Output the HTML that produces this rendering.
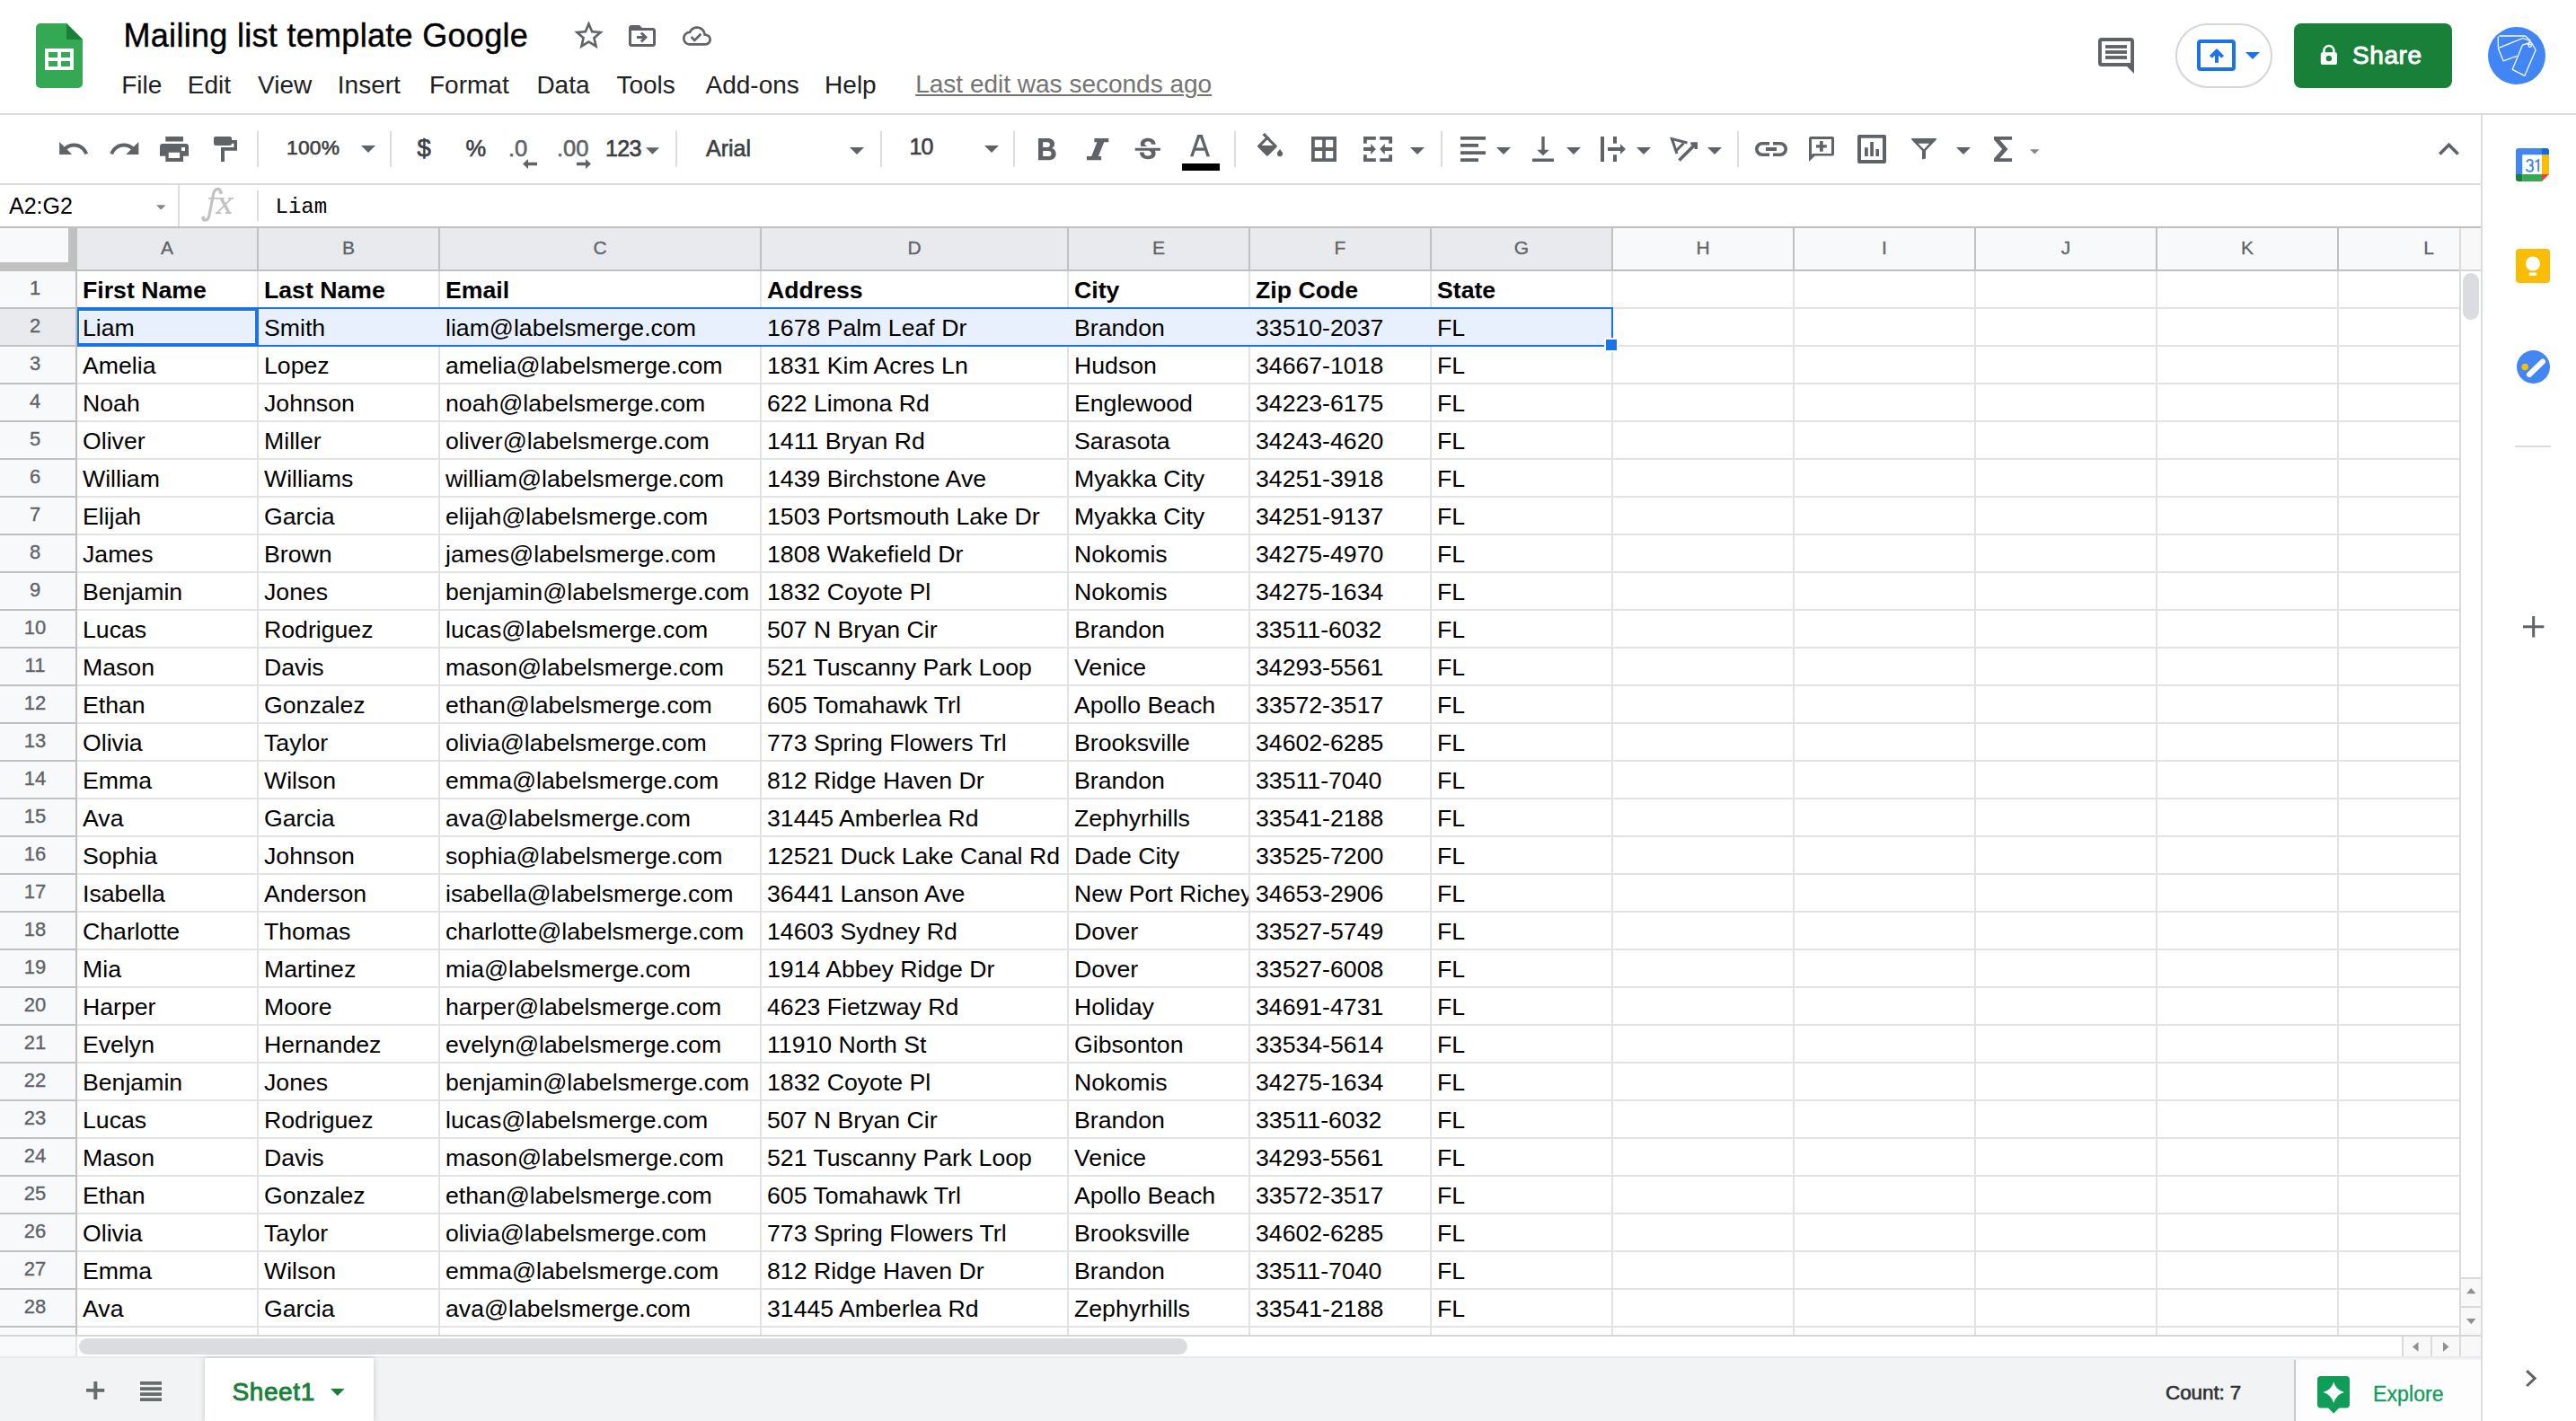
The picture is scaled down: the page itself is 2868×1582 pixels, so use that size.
<!DOCTYPE html>
<html><head><meta charset="utf-8"><title>Mailing list template Google - Google Sheets</title>
<style>
html,body{margin:0;padding:0;}
body{width:2868px;height:1582px;overflow:hidden;position:relative;background:#fff;font-family:"Liberation Sans",sans-serif;}
.t{position:absolute;white-space:nowrap;}
.r{position:absolute;}
.s{position:absolute;overflow:visible;}
.cell{position:absolute;white-space:nowrap;overflow:hidden;font-size:26.67px;line-height:26.67px;color:#000;}
</style></head><body>

<svg class="s" style="left:40px;top:26px;" width="52" height="72" viewBox="0 0 52 72"><path d="M5 0H34L52 18V67A5 5 0 0 1 47 72H5A5 5 0 0 1 0 67V5A5 5 0 0 1 5 0Z" fill="#34a853"/><path d="M34 0L52 18H34Z" fill="#188038"/><path d="M10 28H42V52H10Z M14 32V38H24V32Z M28 32V38H38V32Z M14 42V48H24V42Z M28 42V48H38V42Z" fill="#fff" fill-rule="evenodd"/></svg>
<div class="t" style="left:137.5px;top:21.5px;font-size:36px;line-height:36px;color:#000;font-weight:normal;letter-spacing:0.3px;-webkit-text-stroke:0.4px #000;">Mailing list template Google</div>
<svg class="s" style="left:635.8px;top:20.3px;" width="39" height="39" viewBox="0 0 24 24"><path fill="#5f6368" d="M22 9.24l-7.19-.62L12 2 9.19 8.63 2 9.24l5.46 4.73L5.82 21 12 17.27 18.18 21l-1.63-7.03L22 9.24zM12 15.4l-3.76 2.27 1-4.28-3.32-2.88 4.38-.38L12 6.1l1.71 4.04 4.38.38-3.32 2.88 1 4.28L12 15.4z"/></svg>
<svg class="s" style="left:697px;top:22px;" width="36" height="36" viewBox="0 0 24 24"><path fill="#5f6368" d="M20 6h-8l-2-2H4c-1.1 0-1.99.9-1.99 2L2 18c0 1.1.9 2 2 2h16c1.1 0 2-.9 2-2V8c0-1.1-.9-2-2-2zm0 12H4V8h16v10zm-7.84-6H8v2h4.16l-1.59 1.59L11.99 17 16 13.01 11.99 9l-1.41 1.41L12.16 12z"/></svg>
<svg class="s" style="left:760px;top:23.5px;" width="32" height="32" viewBox="0 0 24 24"><path fill="#5f6368" d="M19.35 10.04C18.67 6.59 15.64 4 12 4 9.11 4 6.6 5.64 5.35 8.04 2.34 8.36 0 10.91 0 14c0 3.31 2.69 6 6 6h13c2.76 0 5-2.24 5-5 0-2.64-2.05-4.78-4.65-4.960zM19 18H6c-2.21 0-4-1.79-4-4 0-2.050 1.53-3.76 3.56-3.97l1.07-.11.5-.95C8.08 7.14 9.94 6 12 6c2.62 0 4.88 1.86 5.39 4.43l.3 1.5 1.53.11c1.56.1 2.78 1.41 2.78 2.96 0 1.65-1.35 3-3 3zm-9-3.82l-2.09-2.09L6.5 13.5 10 17l6.01-6.01-1.41-1.41z"/></svg>
<div class="t" style="left:135.2px;top:80.6px;font-size:28px;line-height:28px;color:#202124;font-weight:normal;">File</div>
<div class="t" style="left:208.8px;top:80.6px;font-size:28px;line-height:28px;color:#202124;font-weight:normal;">Edit</div>
<div class="t" style="left:287.0px;top:80.6px;font-size:28px;line-height:28px;color:#202124;font-weight:normal;">View</div>
<div class="t" style="left:375.8px;top:80.6px;font-size:28px;line-height:28px;color:#202124;font-weight:normal;">Insert</div>
<div class="t" style="left:478.0px;top:80.6px;font-size:28px;line-height:28px;color:#202124;font-weight:normal;">Format</div>
<div class="t" style="left:597.4px;top:80.6px;font-size:28px;line-height:28px;color:#202124;font-weight:normal;">Data</div>
<div class="t" style="left:686.4px;top:80.6px;font-size:28px;line-height:28px;color:#202124;font-weight:normal;">Tools</div>
<div class="t" style="left:785.5px;top:80.6px;font-size:28px;line-height:28px;color:#202124;font-weight:normal;">Add-ons</div>
<div class="t" style="left:918.1px;top:80.6px;font-size:28px;line-height:28px;color:#202124;font-weight:normal;">Help</div>
<div class="t" style="left:1019.2px;top:80.0px;font-size:28px;line-height:28px;color:#747474;font-weight:normal;text-decoration:underline;text-decoration-thickness:2px;text-underline-offset:2px;">Last edit was seconds ago</div>
<svg class="s" style="left:2336px;top:42px;" width="40" height="40" viewBox="0 0 40 40"><path fill="#5f6368" fill-rule="evenodd" d="M4 0H36A4 4 0 0 1 40 4V40L32 32H4A4 4 0 0 1 0 28V4A4 4 0 0 1 4 0ZM3.9 3.9V28.1H36.1V3.9Z"/><rect x="8" y="8.1" width="24" height="3.8" fill="#5f6368"/><rect x="8" y="14.1" width="24" height="3.8" fill="#5f6368"/><rect x="8" y="20.1" width="24" height="3.8" fill="#5f6368"/></svg>
<div class="r" style="left:2422px;top:26px;width:103.5px;height:67.5px;border:2px solid #d6d6d6;border-radius:36px;"></div>
<div class="r" style="left:2446px;top:44px;width:35.2px;height:27.2px;border:4.4px solid #1a73e8;border-radius:4px;"></div>
<svg class="s" style="left:2457px;top:50px;" width="22" height="22" viewBox="0 0 22 22"><path fill="none" stroke="#1a73e8" stroke-width="4" d="M4.4 13.4L11 6.8L17.6 13.4"/><rect x="9" y="7" width="4" height="12.8" fill="#1a73e8"/></svg>
<svg class="s" style="left:2499.6px;top:57.8px;" width="16" height="8.2" viewBox="0 0 16 8"><path fill="#1a73e8" d="M0 0H16L8 8Z"/></svg>
<div class="r" style="left:2554px;top:26px;width:176px;height:72px;background:#188038;border-radius:8px;"></div>
<svg class="s" style="left:2583px;top:49px;" width="20" height="24" viewBox="0 0 20 24"><path fill="none" stroke="#fff" stroke-width="2.6" d="M4.4 10V7.5A5.5 5.5 0 0 1 15.4 7.5V10"/><rect x="0.8" y="9.2" width="18.2" height="13.9" rx="2" fill="#fff"/><circle cx="9.9" cy="16.1" r="3.2" fill="#188038"/></svg>
<div class="t" style="left:2619.0px;top:48.3px;font-size:28px;line-height:28px;color:#fff;font-weight:normal;letter-spacing:0.6px;-webkit-text-stroke:0.9px #fff;">Share</div>
<svg class="s" style="left:2770px;top:30px;" width="64" height="64" viewBox="0 0 64 64"><circle cx="32" cy="32" r="32" fill="#4285f4"/><g fill="none" stroke="#fff" stroke-width="1.3" stroke-linejoin="round"><path d="M12.5 10H41.4L47.3 15.3"/><path d="M11.3 22.5V10.5"/><path d="M11.3 23.7L39 12.5L47 15.5L44 20"/><path d="M11.3 23.7L17.2 37.9L32 32.3"/><path d="M38.5 20.1L48 17.2L53.2 25.5L40.8 54.4L27.2 47.3Z"/><circle cx="46.7" cy="20.7" r="1.6"/></g></svg>
<div class="r" style="left:0px;top:126px;width:2868px;height:2px;background:#dadce0;"></div>
<svg class="s" style="left:62.877761413843885px;top:147.0721649484536px;" width="37.466863033873345" height="37.466863033873345" viewBox="0 0 24 24"><path fill="#5f6368" d="M12.5 8c-2.65 0-5.05.99-6.9 2.6L2 7v9h9l-3.62-3.62c1.39-1.16 3.16-1.88 5.12-1.88 3.54 0 6.55 2.31 7.6 5.5l2.37-.78C21.08 11.03 17.15 8 12.5 8z"/></svg>
<svg class="s" style="left:119.5958762886598px;top:147.0721649484536px;" width="37.466863033873345" height="37.466863033873345" viewBox="0 0 24 24"><path fill="#5f6368" d="M18.4 10.6C16.55 8.99 14.15 8 11.5 8c-4.65 0-8.58 3.03-9.96 7.22L3.9 16c1.05-3.19 4.05-5.5 7.6-5.5 1.95 0 3.73.72 5.12 1.88L13 16h9V7l-3.6 3.6z"/></svg>
<svg class="s" style="left:178px;top:152px;" width="32" height="28" viewBox="0 0 32 28"><path fill="#5f6368" fill-rule="evenodd" d="M6.3 0H26V5.6H6.3Z M3 8H29A3 3 0 0 1 32 11V21.7H26V28H6.3V21.7H0V11A3 3 0 0 1 3 8Z M9.7 17.8V23.9H22.1V17.8Z M24 12V16H28V12Z"/></svg>
<svg class="s" style="left:238px;top:152px;" width="26" height="28" viewBox="0 0 26 28"><path fill="#5f6368" d="M2 0H18A2 2 0 0 1 20 2V8A2 2 0 0 1 18 10H2A2 2 0 0 1 0 8V2A2 2 0 0 1 2 0Z M20 4H26V15.8H12V28H8V12H22.4V7.8H20Z"/></svg>
<div class="r" style="left:286px;top:146px;width:2px;height:40px;background:#dadce0;"></div>
<div class="t" style="left:319.0px;top:152.5px;font-size:22.8px;line-height:22.8px;color:#3c4043;font-weight:normal;letter-spacing:0.2px;-webkit-text-stroke:0.6px #3c4043;">100%</div>
<svg class="s" style="left:402px;top:162px;" width="16" height="8" viewBox="0 0 16 8"><path fill="#5f6368" d="M0 0H16L8 8Z"/></svg>
<div class="r" style="left:434px;top:146px;width:2px;height:40px;background:#dadce0;"></div>
<div class="t" style="left:464.5px;top:151.2px;font-size:27.5px;line-height:27.5px;color:#3c4043;font-weight:normal;-webkit-text-stroke:0.7px #3c4043;">$</div>
<div class="t" style="left:518.5px;top:152.9px;font-size:25.5px;line-height:25.5px;color:#3c4043;font-weight:normal;-webkit-text-stroke:0.6px #3c4043;">%</div>
<div class="t" style="left:566.0px;top:152.7px;font-size:25.5px;line-height:25.5px;color:#5f6368;font-weight:normal;-webkit-text-stroke:0.6px #5f6368;">.0</div>
<svg class="s" style="left:582px;top:176.5px;" width="16" height="11" viewBox="0 0 16 11"><path fill="#5f6368" d="M0 5.5L6 0V3.8H16V7.2H6V11Z"/></svg>
<div class="t" style="left:620.0px;top:152.7px;font-size:25.5px;line-height:25.5px;color:#5f6368;font-weight:normal;-webkit-text-stroke:0.6px #5f6368;">.00</div>
<svg class="s" style="left:642px;top:176.5px;" width="16" height="11" viewBox="0 0 16 11"><path fill="#5f6368" d="M16 5.5L10 0V3.8H0V7.2H10V11Z"/></svg>
<div class="t" style="left:674.0px;top:152.8px;font-size:25px;line-height:25px;color:#3c4043;font-weight:normal;letter-spacing:-0.6px;-webkit-text-stroke:0.7px #3c4043;">123</div>
<svg class="s" style="left:718.5px;top:163.8px;" width="15" height="8" viewBox="0 0 16 8"><path fill="#5f6368" d="M0 0H16L8 8Z"/></svg>
<div class="r" style="left:752px;top:146px;width:2px;height:40px;background:#dadce0;"></div>
<div class="t" style="left:786.0px;top:152.8px;font-size:25px;line-height:25px;color:#3c4043;font-weight:normal;letter-spacing:0px;-webkit-text-stroke:0.6px #3c4043;">Arial</div>
<svg class="s" style="left:946px;top:163.8px;" width="16" height="8" viewBox="0 0 16 8"><path fill="#5f6368" d="M0 0H16L8 8Z"/></svg>
<div class="r" style="left:980px;top:146px;width:2px;height:40px;background:#dadce0;"></div>
<div class="t" style="left:1012.5px;top:151.1px;font-size:25px;line-height:25px;color:#3c4043;font-weight:normal;letter-spacing:-0.8px;-webkit-text-stroke:0.6px #3c4043;">10</div>
<svg class="s" style="left:1096px;top:162px;" width="16" height="8" viewBox="0 0 16 8"><path fill="#5f6368" d="M0 0H16L8 8Z"/></svg>
<div class="r" style="left:1128px;top:146px;width:2px;height:40px;background:#dadce0;"></div>
<svg class="s" style="left:1156px;top:153.7px;" width="20" height="24.3" viewBox="0 0 20 24.3"><path fill="#5f6368" fill-rule="evenodd" d="M0 0H10.5C15 0 18 2.4 18 6.2C18 8.6 16.8 10.3 15 11C17.8 11.8 19.7 14 19.7 17.2C19.7 21.7 16.4 24.3 11.5 24.3H0Z M5.2 4.2V10H10C12 10 13 8.9 13 7.1C13 5.2 12 4.2 10 4.2Z M5.2 13.9V20.1H11C13.3 20.1 14.5 18.9 14.5 17C14.5 15 13.3 13.9 11 13.9Z"/></svg>
<svg class="s" style="left:1210px;top:153.7px;" width="24.3" height="24.3" viewBox="0 0 24.3 24.3"><path fill="#5f6368" d="M8.4 0H24.3V4.3H19.2L12.9 20H16.1V24.3H0V20H5.2L11.4 4.3H8.4Z"/></svg>
<svg class="s" style="left:1258.899px;top:149.1423px;" width="37.608" height="37.608" viewBox="0 0 24 24"><path fill="#5f6368" d="M7.24 8.75c-.26-.48-.39-1.03-.39-1.67 0-.61.13-1.16.4-1.67.26-.5.63-.93 1.11-1.29.48-.35 1.05-.63 1.7-.83.66-.19 1.39-.29 2.18-.29.81 0 1.54.11 2.21.34.66.22 1.230.54 1.69.94.47.4.83.88 1.08 1.43.25.55.38 1.15.38 1.81h-3.01c0-.31-.05-.59-.15-.85-.09-.27-.24-.49-.44-.68-.2-.19-.45-.33-.75-.44-.3-.1-.66-.16-1.06-.16-.39 0-.74.04-1.03.13-.29.09-.53.21-.72.36-.19.16-.34.34-.44.55-.1.21-.15.43-.15.66 0 .48.25.88.74 1.21.38.25.77.48 1.41.7H7.39c-.05-.08-.11-.17-.15-.25zM21 12v-2H3v2h9.62c.18.07.4.14.55.2.37.17.66.34.87.51.21.17.35.36.43.57.07.2.11.43.11.69 0 .23-.05.45-.14.66-.09.2-.23.38-.42.53-.19.15-.42.26-.71.35-.29.08-.63.13-1.01.13-.43 0-.83-.04-1.18-.13s-.66-.23-.91-.42c-.25-.19-.45-.44-.59-.75-.14-.31-.25-.76-.25-1.21H6.4c0 .55.08 1.13.24 1.58.16.45.37.85.65 1.21.28.35.6.66.98.92.37.26.78.48 1.22.65.44.17.9.3 1.38.39.48.08.96.13 1.44.13.8 0 1.53-.09 2.18-.28s1.21-.45 1.67-.79c.46-.34.82-.77 1.07-1.27s.38-1.07.38-1.71c0-.6-.1-1.14-.31-1.61-.05-.11-.11-.23-.17-.33H21z"/></svg>
<svg class="s" style="left:1325px;top:149.8px;" width="22" height="24.2" viewBox="0 0 22 24.2"><path fill="#5f6368" fill-rule="evenodd" d="M8.3 0H13.7L22 24.2H18.5L16.3 17.8H5.7L3.5 24.2H0Z M6.8 14.5H15.2L11 2.8Z"/></svg>
<div class="r" style="left:1316px;top:182px;width:42px;height:8px;background:#000;"></div>
<div class="r" style="left:1374px;top:146px;width:2px;height:40px;background:#dadce0;"></div>
<svg class="s" style="left:1398px;top:146px;" width="32" height="30" viewBox="0 0 32 30"><path fill="#5f6368" stroke="#5f6368" stroke-width="2" stroke-linejoin="round" fill-rule="evenodd" d="M12.9 6.8L22.9 16.8L12.9 26.8L2.9 16.8Z M12.9 9.6L6.6 16H19.2Z"/><path fill="#fff" d="M12.9 9.6L6.6 16H19.2Z"/><path stroke="#5f6368" stroke-width="3.2" d="M8.7 3L14.6 8.9"/><path fill="#5f6368" d="M27 19.9L24.3 23.6A3.1 3.1 0 1 0 29.7 23.6Z"/></svg>
<svg class="s" style="left:1460px;top:152px;" width="28" height="28" viewBox="0 0 28 28"><path fill="#5f6368" fill-rule="evenodd" d="M0 0H28V28H0Z M3.8 3.8V12.1H12.1V3.8Z M15.9 3.8V12.1H24.2V3.8Z M3.8 15.9V24.2H12.1V15.9Z M15.9 15.9V24.2H24.2V15.9Z"/></svg>
<svg class="s" style="left:1518px;top:152px;" width="32" height="28" viewBox="0 0 32 28"><path fill="#5f6368" d="M0 0H13.8V3.8H3.8V7.8H0Z M32 0H18.2V3.8H28.2V7.8H32Z M0 28H13.8V24.2H3.8V20.2H0Z M32 28H18.2V24.2H28.2V20.2H32Z M0 12H8.2V8.1L13.8 14L8.2 19.9V16H0Z M32 12H23.8V8.1L18.2 14L23.8 19.9V16H32Z"/></svg>
<svg class="s" style="left:1570px;top:163.8px;" width="16" height="8" viewBox="0 0 16 8"><path fill="#5f6368" d="M0 0H16L8 8Z"/></svg>
<div class="r" style="left:1604px;top:146px;width:2px;height:40px;background:#dadce0;"></div>
<svg class="s" style="left:1626px;top:152px;" width="28" height="28" viewBox="0 0 28 28"><path fill="#5f6368" d="M0 0H28V3.7H0Z M0 8.1H20V11.8H0Z M0 16.2H28V19.9H0Z M0 24.3H20V28H0Z"/></svg>
<svg class="s" style="left:1665.6px;top:163.8px;" width="16" height="8" viewBox="0 0 16 8"><path fill="#5f6368" d="M0 0H16L8 8Z"/></svg>
<svg class="s" style="left:1706px;top:152px;" width="24" height="28" viewBox="0 0 24 28"><path fill="#5f6368" d="M10.3 0H13.7V14.8H18.8L12 21.3L5.2 14.8H10.3Z M0 24.4H24V28H0Z"/></svg>
<svg class="s" style="left:1744.4px;top:163.8px;" width="16" height="8" viewBox="0 0 16 8"><path fill="#5f6368" d="M0 0H16L8 8Z"/></svg>
<svg class="s" style="left:1782px;top:152px;" width="28" height="28" viewBox="0 0 28 28"><path fill="#5f6368" d="M0 0H4V28H0Z M14 0H18V7.8H14Z M14 20.2H18V28H14Z M8 12H22V8.2L28 14L22 19.8V16H8Z"/></svg>
<svg class="s" style="left:1822px;top:163.8px;" width="16" height="8" viewBox="0 0 16 8"><path fill="#5f6368" d="M0 0H16L8 8Z"/></svg>
<svg class="s" style="left:1855px;top:148px;" width="38" height="36" viewBox="0 0 38 36"><g fill="none" stroke="#5f6368" stroke-linejoin="miter" stroke-miterlimit="10"><path stroke-width="3" d="M23.5 11L6.4 6.6L12 23"/><path stroke-width="3" d="M19.4 11.5L11.5 19.5"/><path stroke-width="3.6" d="M14.5 30.5L33.3 11.7"/><path stroke-width="3.4" d="M27.3 11.9H33.3V18"/></g></svg>
<svg class="s" style="left:1900.5px;top:163.8px;" width="16" height="8" viewBox="0 0 16 8"><path fill="#5f6368" d="M0 0H16L8 8Z"/></svg>
<div class="r" style="left:1934px;top:146px;width:2px;height:40px;background:#dadce0;"></div>
<svg class="s" style="left:1954px;top:158px;" width="36" height="16" viewBox="0 0 36 16"><path fill="#5f6368" d="M16 0H8A8 8 0 0 0 8 16H16V12.4H8A4.4 4.4 0 0 1 8 3.6H16Z M20 0H28A8 8 0 0 1 28 16H20V12.4H28A4.4 4.4 0 0 0 28 3.6H20Z M12 6H24V10H12Z"/></svg>
<svg class="s" style="left:2014px;top:152px;" width="28" height="28" viewBox="0 0 28 28"><path fill="#5f6368" fill-rule="evenodd" d="M2 0H26A2 2 0 0 1 28 2V19.4A2 2 0 0 1 26 21.4H6.6L0 28V2A2 2 0 0 1 2 0Z M3 3V20.3L4.4 19.1H25V3Z"/><path fill="#5f6368" d="M12 5.1H15.7V9.3H19.8V12.6H15.7V16.7H12V12.6H8V9.3H12Z"/></svg>
<svg class="s" style="left:2068px;top:150px;" width="32" height="32" viewBox="0 0 32 32"><path fill="#5f6368" fill-rule="evenodd" d="M2 0H30A2 2 0 0 1 32 2V30A2 2 0 0 1 30 32H2A2 2 0 0 1 0 30V2A2 2 0 0 1 2 0Z M4 3.8V28H28V3.8Z"/><path fill="#5f6368" d="M8 14.2H11.8V23.9H8Z M14.2 8.1H17.9V23.9H14.2Z M20.4 16H24V23.9H20.4Z"/></svg>
<svg class="s" style="left:2128px;top:154px;" width="28" height="24" viewBox="0 0 28 24"><path fill="#5f6368" fill-rule="evenodd" d="M0.5 0H27.5L28 1.2L16 13.8V22.4L12 23.6V13.8L0 1.2Z M7.6 5.7L14 12.2L20.1 5.7Z"/></svg>
<svg class="s" style="left:2178px;top:163.8px;" width="16" height="8" viewBox="0 0 16 8"><path fill="#5f6368" d="M0 0H16L8 8Z"/></svg>
<svg class="s" style="left:2220px;top:152px;" width="20" height="28" viewBox="0 0 20 28"><path fill="#5f6368" d="M0 0H20V3.8H6.4L15.5 14L6.4 24.2H20V28H0V24.4L9.1 14L0 3.6Z"/></svg>
<svg class="s" style="left:2259.6px;top:166px;" width="10.5" height="5.6" viewBox="0 0 16 8"><path fill="#80868b" d="M0 0H16L8 8Z"/></svg>
<svg class="s" style="left:2714.7px;top:158px;" width="23" height="15" viewBox="0 0 23 15"><path fill="none" stroke="#5f6368" stroke-width="3.6" d="M1.3 13.5L11.5 3.2L21.7 13.5"/></svg>
<div class="r" style="left:0px;top:204px;width:2763px;height:2px;background:#dadce0;"></div>
<div class="t" style="left:10.0px;top:216.5px;font-size:25px;line-height:25px;color:#000;font-weight:normal;">A2:G2</div>
<svg class="s" style="left:174px;top:228px;" width="10.5" height="5.8" viewBox="0 0 16 8"><path fill="#80868b" d="M0 0H16L8 8Z"/></svg>
<div class="r" style="left:198px;top:206px;width:2px;height:46px;background:#dadce0;"></div>
<svg class="s" style="left:220px;top:205px;" width="45" height="45" viewBox="0 0 45 45"><g fill="none" stroke="#c2c2c2"><path stroke-width="3.2" d="M25.6 8.6C25 6.2 23.8 5.3 22.4 5.4C19.4 5.6 17.9 8.3 17.3 12L13.3 33C12.7 37.4 10.6 40.3 8 40.2C6.6 40.1 5.8 39 6.1 37.6"/><path stroke-width="1.9" d="M11.9 15.9H29.4M34.1 15.85H40M20 32.05H25.9M31.1 32.05H37.6"/><path stroke-width="3.4" d="M26.4 16.1L35 32"/><path stroke-width="1.8" d="M37.1 16.1L21.9 32"/></g><circle cx="25.9" cy="9.2" r="2.1" fill="#c2c2c2"/><circle cx="6.3" cy="37.6" r="2.1" fill="#c2c2c2"/></svg>
<div class="r" style="left:286px;top:212px;width:2px;height:34px;background:#dadce0;"></div>
<div class="t" style="left:306.5px;top:219.3px;font-size:24px;line-height:24px;color:#000;font-family:'Liberation Mono',monospace;">Liam</div>
<div class="r" style="left:0px;top:252px;width:2762px;height:2px;background:#c0c0c0;"></div>
<div class="r" style="left:0px;top:254px;width:86px;height:46px;background:#f8f9fa;"></div>
<div class="r" style="left:86px;top:254px;width:1710px;height:46px;background:#e8eaed;"></div>
<div class="r" style="left:1796px;top:254px;width:943px;height:46px;background:#f8f9fa;"></div>
<div class="r" style="left:2739px;top:254px;width:23px;height:46px;background:#f8f8f8;"></div>
<div class="r" style="left:2739px;top:300px;width:23px;height:2px;background:#d4d4d4;"></div>
<div class="r" style="left:0px;top:300px;width:2739px;height:2px;background:#c0c0c0;"></div>
<div class="t" style="left:86px;top:265.2px;width:200px;text-align:center;font-size:21px;line-height:21px;color:#5f6368;-webkit-text-stroke:0.3px #5f6368;">A</div>
<div class="r" style="left:286px;top:254px;width:2px;height:46px;background:#c0c0c0;"></div>
<div class="t" style="left:288px;top:265.2px;width:200px;text-align:center;font-size:21px;line-height:21px;color:#5f6368;-webkit-text-stroke:0.3px #5f6368;">B</div>
<div class="r" style="left:488px;top:254px;width:2px;height:46px;background:#c0c0c0;"></div>
<div class="t" style="left:490px;top:265.2px;width:356px;text-align:center;font-size:21px;line-height:21px;color:#5f6368;-webkit-text-stroke:0.3px #5f6368;">C</div>
<div class="r" style="left:846px;top:254px;width:2px;height:46px;background:#c0c0c0;"></div>
<div class="t" style="left:848px;top:265.2px;width:340px;text-align:center;font-size:21px;line-height:21px;color:#5f6368;-webkit-text-stroke:0.3px #5f6368;">D</div>
<div class="r" style="left:1188px;top:254px;width:2px;height:46px;background:#c0c0c0;"></div>
<div class="t" style="left:1190px;top:265.2px;width:200px;text-align:center;font-size:21px;line-height:21px;color:#5f6368;-webkit-text-stroke:0.3px #5f6368;">E</div>
<div class="r" style="left:1390px;top:254px;width:2px;height:46px;background:#c0c0c0;"></div>
<div class="t" style="left:1392px;top:265.2px;width:200px;text-align:center;font-size:21px;line-height:21px;color:#5f6368;-webkit-text-stroke:0.3px #5f6368;">F</div>
<div class="r" style="left:1592px;top:254px;width:2px;height:46px;background:#c0c0c0;"></div>
<div class="t" style="left:1594px;top:265.2px;width:200px;text-align:center;font-size:21px;line-height:21px;color:#5f6368;-webkit-text-stroke:0.3px #5f6368;">G</div>
<div class="r" style="left:1794px;top:254px;width:2px;height:46px;background:#c0c0c0;"></div>
<div class="t" style="left:1796px;top:265.2px;width:200px;text-align:center;font-size:21px;line-height:21px;color:#5f6368;-webkit-text-stroke:0.3px #5f6368;">H</div>
<div class="r" style="left:1996px;top:254px;width:2px;height:46px;background:#c0c0c0;"></div>
<div class="t" style="left:1998px;top:265.2px;width:200px;text-align:center;font-size:21px;line-height:21px;color:#5f6368;-webkit-text-stroke:0.3px #5f6368;">I</div>
<div class="r" style="left:2198px;top:254px;width:2px;height:46px;background:#c0c0c0;"></div>
<div class="t" style="left:2200px;top:265.2px;width:200px;text-align:center;font-size:21px;line-height:21px;color:#5f6368;-webkit-text-stroke:0.3px #5f6368;">J</div>
<div class="r" style="left:2400px;top:254px;width:2px;height:46px;background:#c0c0c0;"></div>
<div class="t" style="left:2402px;top:265.2px;width:200px;text-align:center;font-size:21px;line-height:21px;color:#5f6368;-webkit-text-stroke:0.3px #5f6368;">K</div>
<div class="r" style="left:2602px;top:254px;width:2px;height:46px;background:#c0c0c0;"></div>
<div class="t" style="left:2604px;top:265.2px;width:200px;text-align:center;font-size:21px;line-height:21px;color:#5f6368;-webkit-text-stroke:0.3px #5f6368;">L</div>
<div class="r" style="left:0px;top:302px;width:84px;height:1185px;background:#f8f9fa;"></div>
<div class="r" style="left:0px;top:344px;width:84px;height:40px;background:#e8eaed;"></div>
<div class="r" style="left:84px;top:254px;width:2px;height:1256px;background:#c0c0c0;"></div>
<div class="r" style="left:76px;top:254px;width:8px;height:46px;background:#c0c0c0;"></div>
<div class="r" style="left:0px;top:292px;width:84px;height:8px;background:#c0c0c0;"></div>
<div class="r" style="left:286px;top:302px;width:2px;height:1185px;background:#e2e3e3;"></div>
<div class="r" style="left:488px;top:302px;width:2px;height:1185px;background:#e2e3e3;"></div>
<div class="r" style="left:846px;top:302px;width:2px;height:1185px;background:#e2e3e3;"></div>
<div class="r" style="left:1188px;top:302px;width:2px;height:1185px;background:#e2e3e3;"></div>
<div class="r" style="left:1390px;top:302px;width:2px;height:1185px;background:#e2e3e3;"></div>
<div class="r" style="left:1592px;top:302px;width:2px;height:1185px;background:#e2e3e3;"></div>
<div class="r" style="left:1794px;top:302px;width:2px;height:1185px;background:#e2e3e3;"></div>
<div class="r" style="left:1996px;top:302px;width:2px;height:1185px;background:#e2e3e3;"></div>
<div class="r" style="left:2198px;top:302px;width:2px;height:1185px;background:#e2e3e3;"></div>
<div class="r" style="left:2400px;top:302px;width:2px;height:1185px;background:#e2e3e3;"></div>
<div class="r" style="left:2602px;top:302px;width:2px;height:1185px;background:#e2e3e3;"></div>
<div class="r" style="left:86px;top:342px;width:2653px;height:2px;background:#e2e3e3;"></div>
<div class="r" style="left:0px;top:342px;width:84px;height:2px;background:#c0c0c0;"></div>
<div class="r" style="left:86px;top:384px;width:2653px;height:2px;background:#e2e3e3;"></div>
<div class="r" style="left:0px;top:384px;width:84px;height:2px;background:#c0c0c0;"></div>
<div class="r" style="left:86px;top:426px;width:2653px;height:2px;background:#e2e3e3;"></div>
<div class="r" style="left:0px;top:426px;width:84px;height:2px;background:#c0c0c0;"></div>
<div class="r" style="left:86px;top:468px;width:2653px;height:2px;background:#e2e3e3;"></div>
<div class="r" style="left:0px;top:468px;width:84px;height:2px;background:#c0c0c0;"></div>
<div class="r" style="left:86px;top:510px;width:2653px;height:2px;background:#e2e3e3;"></div>
<div class="r" style="left:0px;top:510px;width:84px;height:2px;background:#c0c0c0;"></div>
<div class="r" style="left:86px;top:552px;width:2653px;height:2px;background:#e2e3e3;"></div>
<div class="r" style="left:0px;top:552px;width:84px;height:2px;background:#c0c0c0;"></div>
<div class="r" style="left:86px;top:594px;width:2653px;height:2px;background:#e2e3e3;"></div>
<div class="r" style="left:0px;top:594px;width:84px;height:2px;background:#c0c0c0;"></div>
<div class="r" style="left:86px;top:636px;width:2653px;height:2px;background:#e2e3e3;"></div>
<div class="r" style="left:0px;top:636px;width:84px;height:2px;background:#c0c0c0;"></div>
<div class="r" style="left:86px;top:678px;width:2653px;height:2px;background:#e2e3e3;"></div>
<div class="r" style="left:0px;top:678px;width:84px;height:2px;background:#c0c0c0;"></div>
<div class="r" style="left:86px;top:720px;width:2653px;height:2px;background:#e2e3e3;"></div>
<div class="r" style="left:0px;top:720px;width:84px;height:2px;background:#c0c0c0;"></div>
<div class="r" style="left:86px;top:762px;width:2653px;height:2px;background:#e2e3e3;"></div>
<div class="r" style="left:0px;top:762px;width:84px;height:2px;background:#c0c0c0;"></div>
<div class="r" style="left:86px;top:804px;width:2653px;height:2px;background:#e2e3e3;"></div>
<div class="r" style="left:0px;top:804px;width:84px;height:2px;background:#c0c0c0;"></div>
<div class="r" style="left:86px;top:846px;width:2653px;height:2px;background:#e2e3e3;"></div>
<div class="r" style="left:0px;top:846px;width:84px;height:2px;background:#c0c0c0;"></div>
<div class="r" style="left:86px;top:888px;width:2653px;height:2px;background:#e2e3e3;"></div>
<div class="r" style="left:0px;top:888px;width:84px;height:2px;background:#c0c0c0;"></div>
<div class="r" style="left:86px;top:930px;width:2653px;height:2px;background:#e2e3e3;"></div>
<div class="r" style="left:0px;top:930px;width:84px;height:2px;background:#c0c0c0;"></div>
<div class="r" style="left:86px;top:972px;width:2653px;height:2px;background:#e2e3e3;"></div>
<div class="r" style="left:0px;top:972px;width:84px;height:2px;background:#c0c0c0;"></div>
<div class="r" style="left:86px;top:1014px;width:2653px;height:2px;background:#e2e3e3;"></div>
<div class="r" style="left:0px;top:1014px;width:84px;height:2px;background:#c0c0c0;"></div>
<div class="r" style="left:86px;top:1056px;width:2653px;height:2px;background:#e2e3e3;"></div>
<div class="r" style="left:0px;top:1056px;width:84px;height:2px;background:#c0c0c0;"></div>
<div class="r" style="left:86px;top:1098px;width:2653px;height:2px;background:#e2e3e3;"></div>
<div class="r" style="left:0px;top:1098px;width:84px;height:2px;background:#c0c0c0;"></div>
<div class="r" style="left:86px;top:1140px;width:2653px;height:2px;background:#e2e3e3;"></div>
<div class="r" style="left:0px;top:1140px;width:84px;height:2px;background:#c0c0c0;"></div>
<div class="r" style="left:86px;top:1182px;width:2653px;height:2px;background:#e2e3e3;"></div>
<div class="r" style="left:0px;top:1182px;width:84px;height:2px;background:#c0c0c0;"></div>
<div class="r" style="left:86px;top:1224px;width:2653px;height:2px;background:#e2e3e3;"></div>
<div class="r" style="left:0px;top:1224px;width:84px;height:2px;background:#c0c0c0;"></div>
<div class="r" style="left:86px;top:1266px;width:2653px;height:2px;background:#e2e3e3;"></div>
<div class="r" style="left:0px;top:1266px;width:84px;height:2px;background:#c0c0c0;"></div>
<div class="r" style="left:86px;top:1308px;width:2653px;height:2px;background:#e2e3e3;"></div>
<div class="r" style="left:0px;top:1308px;width:84px;height:2px;background:#c0c0c0;"></div>
<div class="r" style="left:86px;top:1350px;width:2653px;height:2px;background:#e2e3e3;"></div>
<div class="r" style="left:0px;top:1350px;width:84px;height:2px;background:#c0c0c0;"></div>
<div class="r" style="left:86px;top:1392px;width:2653px;height:2px;background:#e2e3e3;"></div>
<div class="r" style="left:0px;top:1392px;width:84px;height:2px;background:#c0c0c0;"></div>
<div class="r" style="left:86px;top:1434px;width:2653px;height:2px;background:#e2e3e3;"></div>
<div class="r" style="left:0px;top:1434px;width:84px;height:2px;background:#c0c0c0;"></div>
<div class="r" style="left:86px;top:1476px;width:2653px;height:2px;background:#e2e3e3;"></div>
<div class="r" style="left:0px;top:1476px;width:84px;height:2px;background:#c0c0c0;"></div>
<div class="r" style="left:86px;top:344px;width:1708px;height:40px;background:#e8f0fe;"></div>
<div class="t" style="left:0px;top:310.0px;width:78px;text-align:center;font-size:22px;line-height:22px;color:#5f6368;-webkit-text-stroke:0.35px #5f6368;">1</div>
<div class="cell" style="left:86px;top:310.4px;width:200px;padding-left:6px;box-sizing:border-box;font-weight:bold;">First Name</div>
<div class="cell" style="left:288px;top:310.4px;width:200px;padding-left:6px;box-sizing:border-box;font-weight:bold;">Last Name</div>
<div class="cell" style="left:490px;top:310.4px;width:356px;padding-left:6px;box-sizing:border-box;font-weight:bold;">Email</div>
<div class="cell" style="left:848px;top:310.4px;width:340px;padding-left:6px;box-sizing:border-box;font-weight:bold;">Address</div>
<div class="cell" style="left:1190px;top:310.4px;width:200px;padding-left:6px;box-sizing:border-box;font-weight:bold;">City</div>
<div class="cell" style="left:1392px;top:310.4px;width:200px;padding-left:6px;box-sizing:border-box;font-weight:bold;">Zip Code</div>
<div class="cell" style="left:1594px;top:310.4px;width:200px;padding-left:6px;box-sizing:border-box;font-weight:bold;">State</div>
<div class="t" style="left:0px;top:352.0px;width:78px;text-align:center;font-size:22px;line-height:22px;color:#5f6368;-webkit-text-stroke:0.35px #5f6368;">2</div>
<div class="cell" style="left:86px;top:352.4px;width:200px;padding-left:6px;box-sizing:border-box;font-weight:normal;">Liam</div>
<div class="cell" style="left:288px;top:352.4px;width:200px;padding-left:6px;box-sizing:border-box;font-weight:normal;">Smith</div>
<div class="cell" style="left:490px;top:352.4px;width:356px;padding-left:6px;box-sizing:border-box;font-weight:normal;">liam@labelsmerge.com</div>
<div class="cell" style="left:848px;top:352.4px;width:340px;padding-left:6px;box-sizing:border-box;font-weight:normal;">1678 Palm Leaf Dr</div>
<div class="cell" style="left:1190px;top:352.4px;width:200px;padding-left:6px;box-sizing:border-box;font-weight:normal;">Brandon</div>
<div class="cell" style="left:1392px;top:352.4px;width:200px;padding-left:6px;box-sizing:border-box;font-weight:normal;">33510-2037</div>
<div class="cell" style="left:1594px;top:352.4px;width:200px;padding-left:6px;box-sizing:border-box;font-weight:normal;">FL</div>
<div class="t" style="left:0px;top:394.0px;width:78px;text-align:center;font-size:22px;line-height:22px;color:#5f6368;-webkit-text-stroke:0.35px #5f6368;">3</div>
<div class="cell" style="left:86px;top:394.4px;width:200px;padding-left:6px;box-sizing:border-box;font-weight:normal;">Amelia</div>
<div class="cell" style="left:288px;top:394.4px;width:200px;padding-left:6px;box-sizing:border-box;font-weight:normal;">Lopez</div>
<div class="cell" style="left:490px;top:394.4px;width:356px;padding-left:6px;box-sizing:border-box;font-weight:normal;">amelia@labelsmerge.com</div>
<div class="cell" style="left:848px;top:394.4px;width:340px;padding-left:6px;box-sizing:border-box;font-weight:normal;">1831 Kim Acres Ln</div>
<div class="cell" style="left:1190px;top:394.4px;width:200px;padding-left:6px;box-sizing:border-box;font-weight:normal;">Hudson</div>
<div class="cell" style="left:1392px;top:394.4px;width:200px;padding-left:6px;box-sizing:border-box;font-weight:normal;">34667-1018</div>
<div class="cell" style="left:1594px;top:394.4px;width:200px;padding-left:6px;box-sizing:border-box;font-weight:normal;">FL</div>
<div class="t" style="left:0px;top:436.0px;width:78px;text-align:center;font-size:22px;line-height:22px;color:#5f6368;-webkit-text-stroke:0.35px #5f6368;">4</div>
<div class="cell" style="left:86px;top:436.4px;width:200px;padding-left:6px;box-sizing:border-box;font-weight:normal;">Noah</div>
<div class="cell" style="left:288px;top:436.4px;width:200px;padding-left:6px;box-sizing:border-box;font-weight:normal;">Johnson</div>
<div class="cell" style="left:490px;top:436.4px;width:356px;padding-left:6px;box-sizing:border-box;font-weight:normal;">noah@labelsmerge.com</div>
<div class="cell" style="left:848px;top:436.4px;width:340px;padding-left:6px;box-sizing:border-box;font-weight:normal;">622 Limona Rd</div>
<div class="cell" style="left:1190px;top:436.4px;width:200px;padding-left:6px;box-sizing:border-box;font-weight:normal;">Englewood</div>
<div class="cell" style="left:1392px;top:436.4px;width:200px;padding-left:6px;box-sizing:border-box;font-weight:normal;">34223-6175</div>
<div class="cell" style="left:1594px;top:436.4px;width:200px;padding-left:6px;box-sizing:border-box;font-weight:normal;">FL</div>
<div class="t" style="left:0px;top:478.0px;width:78px;text-align:center;font-size:22px;line-height:22px;color:#5f6368;-webkit-text-stroke:0.35px #5f6368;">5</div>
<div class="cell" style="left:86px;top:478.4px;width:200px;padding-left:6px;box-sizing:border-box;font-weight:normal;">Oliver</div>
<div class="cell" style="left:288px;top:478.4px;width:200px;padding-left:6px;box-sizing:border-box;font-weight:normal;">Miller</div>
<div class="cell" style="left:490px;top:478.4px;width:356px;padding-left:6px;box-sizing:border-box;font-weight:normal;">oliver@labelsmerge.com</div>
<div class="cell" style="left:848px;top:478.4px;width:340px;padding-left:6px;box-sizing:border-box;font-weight:normal;">1411 Bryan Rd</div>
<div class="cell" style="left:1190px;top:478.4px;width:200px;padding-left:6px;box-sizing:border-box;font-weight:normal;">Sarasota</div>
<div class="cell" style="left:1392px;top:478.4px;width:200px;padding-left:6px;box-sizing:border-box;font-weight:normal;">34243-4620</div>
<div class="cell" style="left:1594px;top:478.4px;width:200px;padding-left:6px;box-sizing:border-box;font-weight:normal;">FL</div>
<div class="t" style="left:0px;top:520.0px;width:78px;text-align:center;font-size:22px;line-height:22px;color:#5f6368;-webkit-text-stroke:0.35px #5f6368;">6</div>
<div class="cell" style="left:86px;top:520.4px;width:200px;padding-left:6px;box-sizing:border-box;font-weight:normal;">William</div>
<div class="cell" style="left:288px;top:520.4px;width:200px;padding-left:6px;box-sizing:border-box;font-weight:normal;">Williams</div>
<div class="cell" style="left:490px;top:520.4px;width:356px;padding-left:6px;box-sizing:border-box;font-weight:normal;">william@labelsmerge.com</div>
<div class="cell" style="left:848px;top:520.4px;width:340px;padding-left:6px;box-sizing:border-box;font-weight:normal;">1439 Birchstone Ave</div>
<div class="cell" style="left:1190px;top:520.4px;width:200px;padding-left:6px;box-sizing:border-box;font-weight:normal;">Myakka City</div>
<div class="cell" style="left:1392px;top:520.4px;width:200px;padding-left:6px;box-sizing:border-box;font-weight:normal;">34251-3918</div>
<div class="cell" style="left:1594px;top:520.4px;width:200px;padding-left:6px;box-sizing:border-box;font-weight:normal;">FL</div>
<div class="t" style="left:0px;top:562.0px;width:78px;text-align:center;font-size:22px;line-height:22px;color:#5f6368;-webkit-text-stroke:0.35px #5f6368;">7</div>
<div class="cell" style="left:86px;top:562.4px;width:200px;padding-left:6px;box-sizing:border-box;font-weight:normal;">Elijah</div>
<div class="cell" style="left:288px;top:562.4px;width:200px;padding-left:6px;box-sizing:border-box;font-weight:normal;">Garcia</div>
<div class="cell" style="left:490px;top:562.4px;width:356px;padding-left:6px;box-sizing:border-box;font-weight:normal;">elijah@labelsmerge.com</div>
<div class="cell" style="left:848px;top:562.4px;width:340px;padding-left:6px;box-sizing:border-box;font-weight:normal;">1503 Portsmouth Lake Dr</div>
<div class="cell" style="left:1190px;top:562.4px;width:200px;padding-left:6px;box-sizing:border-box;font-weight:normal;">Myakka City</div>
<div class="cell" style="left:1392px;top:562.4px;width:200px;padding-left:6px;box-sizing:border-box;font-weight:normal;">34251-9137</div>
<div class="cell" style="left:1594px;top:562.4px;width:200px;padding-left:6px;box-sizing:border-box;font-weight:normal;">FL</div>
<div class="t" style="left:0px;top:604.0px;width:78px;text-align:center;font-size:22px;line-height:22px;color:#5f6368;-webkit-text-stroke:0.35px #5f6368;">8</div>
<div class="cell" style="left:86px;top:604.4px;width:200px;padding-left:6px;box-sizing:border-box;font-weight:normal;">James</div>
<div class="cell" style="left:288px;top:604.4px;width:200px;padding-left:6px;box-sizing:border-box;font-weight:normal;">Brown</div>
<div class="cell" style="left:490px;top:604.4px;width:356px;padding-left:6px;box-sizing:border-box;font-weight:normal;">james@labelsmerge.com</div>
<div class="cell" style="left:848px;top:604.4px;width:340px;padding-left:6px;box-sizing:border-box;font-weight:normal;">1808 Wakefield Dr</div>
<div class="cell" style="left:1190px;top:604.4px;width:200px;padding-left:6px;box-sizing:border-box;font-weight:normal;">Nokomis</div>
<div class="cell" style="left:1392px;top:604.4px;width:200px;padding-left:6px;box-sizing:border-box;font-weight:normal;">34275-4970</div>
<div class="cell" style="left:1594px;top:604.4px;width:200px;padding-left:6px;box-sizing:border-box;font-weight:normal;">FL</div>
<div class="t" style="left:0px;top:646.0px;width:78px;text-align:center;font-size:22px;line-height:22px;color:#5f6368;-webkit-text-stroke:0.35px #5f6368;">9</div>
<div class="cell" style="left:86px;top:646.4px;width:200px;padding-left:6px;box-sizing:border-box;font-weight:normal;">Benjamin</div>
<div class="cell" style="left:288px;top:646.4px;width:200px;padding-left:6px;box-sizing:border-box;font-weight:normal;">Jones</div>
<div class="cell" style="left:490px;top:646.4px;width:356px;padding-left:6px;box-sizing:border-box;font-weight:normal;">benjamin@labelsmerge.com</div>
<div class="cell" style="left:848px;top:646.4px;width:340px;padding-left:6px;box-sizing:border-box;font-weight:normal;">1832 Coyote Pl</div>
<div class="cell" style="left:1190px;top:646.4px;width:200px;padding-left:6px;box-sizing:border-box;font-weight:normal;">Nokomis</div>
<div class="cell" style="left:1392px;top:646.4px;width:200px;padding-left:6px;box-sizing:border-box;font-weight:normal;">34275-1634</div>
<div class="cell" style="left:1594px;top:646.4px;width:200px;padding-left:6px;box-sizing:border-box;font-weight:normal;">FL</div>
<div class="t" style="left:0px;top:688.0px;width:78px;text-align:center;font-size:22px;line-height:22px;color:#5f6368;-webkit-text-stroke:0.35px #5f6368;">10</div>
<div class="cell" style="left:86px;top:688.4px;width:200px;padding-left:6px;box-sizing:border-box;font-weight:normal;">Lucas</div>
<div class="cell" style="left:288px;top:688.4px;width:200px;padding-left:6px;box-sizing:border-box;font-weight:normal;">Rodriguez</div>
<div class="cell" style="left:490px;top:688.4px;width:356px;padding-left:6px;box-sizing:border-box;font-weight:normal;">lucas@labelsmerge.com</div>
<div class="cell" style="left:848px;top:688.4px;width:340px;padding-left:6px;box-sizing:border-box;font-weight:normal;">507 N Bryan Cir</div>
<div class="cell" style="left:1190px;top:688.4px;width:200px;padding-left:6px;box-sizing:border-box;font-weight:normal;">Brandon</div>
<div class="cell" style="left:1392px;top:688.4px;width:200px;padding-left:6px;box-sizing:border-box;font-weight:normal;">33511-6032</div>
<div class="cell" style="left:1594px;top:688.4px;width:200px;padding-left:6px;box-sizing:border-box;font-weight:normal;">FL</div>
<div class="t" style="left:0px;top:730.0px;width:78px;text-align:center;font-size:22px;line-height:22px;color:#5f6368;-webkit-text-stroke:0.35px #5f6368;">11</div>
<div class="cell" style="left:86px;top:730.4px;width:200px;padding-left:6px;box-sizing:border-box;font-weight:normal;">Mason</div>
<div class="cell" style="left:288px;top:730.4px;width:200px;padding-left:6px;box-sizing:border-box;font-weight:normal;">Davis</div>
<div class="cell" style="left:490px;top:730.4px;width:356px;padding-left:6px;box-sizing:border-box;font-weight:normal;">mason@labelsmerge.com</div>
<div class="cell" style="left:848px;top:730.4px;width:340px;padding-left:6px;box-sizing:border-box;font-weight:normal;">521 Tuscanny Park Loop</div>
<div class="cell" style="left:1190px;top:730.4px;width:200px;padding-left:6px;box-sizing:border-box;font-weight:normal;">Venice</div>
<div class="cell" style="left:1392px;top:730.4px;width:200px;padding-left:6px;box-sizing:border-box;font-weight:normal;">34293-5561</div>
<div class="cell" style="left:1594px;top:730.4px;width:200px;padding-left:6px;box-sizing:border-box;font-weight:normal;">FL</div>
<div class="t" style="left:0px;top:772.0px;width:78px;text-align:center;font-size:22px;line-height:22px;color:#5f6368;-webkit-text-stroke:0.35px #5f6368;">12</div>
<div class="cell" style="left:86px;top:772.4px;width:200px;padding-left:6px;box-sizing:border-box;font-weight:normal;">Ethan</div>
<div class="cell" style="left:288px;top:772.4px;width:200px;padding-left:6px;box-sizing:border-box;font-weight:normal;">Gonzalez</div>
<div class="cell" style="left:490px;top:772.4px;width:356px;padding-left:6px;box-sizing:border-box;font-weight:normal;">ethan@labelsmerge.com</div>
<div class="cell" style="left:848px;top:772.4px;width:340px;padding-left:6px;box-sizing:border-box;font-weight:normal;">605 Tomahawk Trl</div>
<div class="cell" style="left:1190px;top:772.4px;width:200px;padding-left:6px;box-sizing:border-box;font-weight:normal;">Apollo Beach</div>
<div class="cell" style="left:1392px;top:772.4px;width:200px;padding-left:6px;box-sizing:border-box;font-weight:normal;">33572-3517</div>
<div class="cell" style="left:1594px;top:772.4px;width:200px;padding-left:6px;box-sizing:border-box;font-weight:normal;">FL</div>
<div class="t" style="left:0px;top:814.0px;width:78px;text-align:center;font-size:22px;line-height:22px;color:#5f6368;-webkit-text-stroke:0.35px #5f6368;">13</div>
<div class="cell" style="left:86px;top:814.4px;width:200px;padding-left:6px;box-sizing:border-box;font-weight:normal;">Olivia</div>
<div class="cell" style="left:288px;top:814.4px;width:200px;padding-left:6px;box-sizing:border-box;font-weight:normal;">Taylor</div>
<div class="cell" style="left:490px;top:814.4px;width:356px;padding-left:6px;box-sizing:border-box;font-weight:normal;">olivia@labelsmerge.com</div>
<div class="cell" style="left:848px;top:814.4px;width:340px;padding-left:6px;box-sizing:border-box;font-weight:normal;">773 Spring Flowers Trl</div>
<div class="cell" style="left:1190px;top:814.4px;width:200px;padding-left:6px;box-sizing:border-box;font-weight:normal;">Brooksville</div>
<div class="cell" style="left:1392px;top:814.4px;width:200px;padding-left:6px;box-sizing:border-box;font-weight:normal;">34602-6285</div>
<div class="cell" style="left:1594px;top:814.4px;width:200px;padding-left:6px;box-sizing:border-box;font-weight:normal;">FL</div>
<div class="t" style="left:0px;top:856.0px;width:78px;text-align:center;font-size:22px;line-height:22px;color:#5f6368;-webkit-text-stroke:0.35px #5f6368;">14</div>
<div class="cell" style="left:86px;top:856.4px;width:200px;padding-left:6px;box-sizing:border-box;font-weight:normal;">Emma</div>
<div class="cell" style="left:288px;top:856.4px;width:200px;padding-left:6px;box-sizing:border-box;font-weight:normal;">Wilson</div>
<div class="cell" style="left:490px;top:856.4px;width:356px;padding-left:6px;box-sizing:border-box;font-weight:normal;">emma@labelsmerge.com</div>
<div class="cell" style="left:848px;top:856.4px;width:340px;padding-left:6px;box-sizing:border-box;font-weight:normal;">812 Ridge Haven Dr</div>
<div class="cell" style="left:1190px;top:856.4px;width:200px;padding-left:6px;box-sizing:border-box;font-weight:normal;">Brandon</div>
<div class="cell" style="left:1392px;top:856.4px;width:200px;padding-left:6px;box-sizing:border-box;font-weight:normal;">33511-7040</div>
<div class="cell" style="left:1594px;top:856.4px;width:200px;padding-left:6px;box-sizing:border-box;font-weight:normal;">FL</div>
<div class="t" style="left:0px;top:898.0px;width:78px;text-align:center;font-size:22px;line-height:22px;color:#5f6368;-webkit-text-stroke:0.35px #5f6368;">15</div>
<div class="cell" style="left:86px;top:898.4px;width:200px;padding-left:6px;box-sizing:border-box;font-weight:normal;">Ava</div>
<div class="cell" style="left:288px;top:898.4px;width:200px;padding-left:6px;box-sizing:border-box;font-weight:normal;">Garcia</div>
<div class="cell" style="left:490px;top:898.4px;width:356px;padding-left:6px;box-sizing:border-box;font-weight:normal;">ava@labelsmerge.com</div>
<div class="cell" style="left:848px;top:898.4px;width:340px;padding-left:6px;box-sizing:border-box;font-weight:normal;">31445 Amberlea Rd</div>
<div class="cell" style="left:1190px;top:898.4px;width:200px;padding-left:6px;box-sizing:border-box;font-weight:normal;">Zephyrhills</div>
<div class="cell" style="left:1392px;top:898.4px;width:200px;padding-left:6px;box-sizing:border-box;font-weight:normal;">33541-2188</div>
<div class="cell" style="left:1594px;top:898.4px;width:200px;padding-left:6px;box-sizing:border-box;font-weight:normal;">FL</div>
<div class="t" style="left:0px;top:940.0px;width:78px;text-align:center;font-size:22px;line-height:22px;color:#5f6368;-webkit-text-stroke:0.35px #5f6368;">16</div>
<div class="cell" style="left:86px;top:940.4px;width:200px;padding-left:6px;box-sizing:border-box;font-weight:normal;">Sophia</div>
<div class="cell" style="left:288px;top:940.4px;width:200px;padding-left:6px;box-sizing:border-box;font-weight:normal;">Johnson</div>
<div class="cell" style="left:490px;top:940.4px;width:356px;padding-left:6px;box-sizing:border-box;font-weight:normal;">sophia@labelsmerge.com</div>
<div class="cell" style="left:848px;top:940.4px;width:340px;padding-left:6px;box-sizing:border-box;font-weight:normal;">12521 Duck Lake Canal Rd</div>
<div class="cell" style="left:1190px;top:940.4px;width:200px;padding-left:6px;box-sizing:border-box;font-weight:normal;">Dade City</div>
<div class="cell" style="left:1392px;top:940.4px;width:200px;padding-left:6px;box-sizing:border-box;font-weight:normal;">33525-7200</div>
<div class="cell" style="left:1594px;top:940.4px;width:200px;padding-left:6px;box-sizing:border-box;font-weight:normal;">FL</div>
<div class="t" style="left:0px;top:982.0px;width:78px;text-align:center;font-size:22px;line-height:22px;color:#5f6368;-webkit-text-stroke:0.35px #5f6368;">17</div>
<div class="cell" style="left:86px;top:982.4px;width:200px;padding-left:6px;box-sizing:border-box;font-weight:normal;">Isabella</div>
<div class="cell" style="left:288px;top:982.4px;width:200px;padding-left:6px;box-sizing:border-box;font-weight:normal;">Anderson</div>
<div class="cell" style="left:490px;top:982.4px;width:356px;padding-left:6px;box-sizing:border-box;font-weight:normal;">isabella@labelsmerge.com</div>
<div class="cell" style="left:848px;top:982.4px;width:340px;padding-left:6px;box-sizing:border-box;font-weight:normal;">36441 Lanson Ave</div>
<div class="cell" style="left:1190px;top:982.4px;width:200px;padding-left:6px;box-sizing:border-box;font-weight:normal;">New Port Richey</div>
<div class="cell" style="left:1392px;top:982.4px;width:200px;padding-left:6px;box-sizing:border-box;font-weight:normal;">34653-2906</div>
<div class="cell" style="left:1594px;top:982.4px;width:200px;padding-left:6px;box-sizing:border-box;font-weight:normal;">FL</div>
<div class="t" style="left:0px;top:1024.0px;width:78px;text-align:center;font-size:22px;line-height:22px;color:#5f6368;-webkit-text-stroke:0.35px #5f6368;">18</div>
<div class="cell" style="left:86px;top:1024.4px;width:200px;padding-left:6px;box-sizing:border-box;font-weight:normal;">Charlotte</div>
<div class="cell" style="left:288px;top:1024.4px;width:200px;padding-left:6px;box-sizing:border-box;font-weight:normal;">Thomas</div>
<div class="cell" style="left:490px;top:1024.4px;width:356px;padding-left:6px;box-sizing:border-box;font-weight:normal;">charlotte@labelsmerge.com</div>
<div class="cell" style="left:848px;top:1024.4px;width:340px;padding-left:6px;box-sizing:border-box;font-weight:normal;">14603 Sydney Rd</div>
<div class="cell" style="left:1190px;top:1024.4px;width:200px;padding-left:6px;box-sizing:border-box;font-weight:normal;">Dover</div>
<div class="cell" style="left:1392px;top:1024.4px;width:200px;padding-left:6px;box-sizing:border-box;font-weight:normal;">33527-5749</div>
<div class="cell" style="left:1594px;top:1024.4px;width:200px;padding-left:6px;box-sizing:border-box;font-weight:normal;">FL</div>
<div class="t" style="left:0px;top:1066.0px;width:78px;text-align:center;font-size:22px;line-height:22px;color:#5f6368;-webkit-text-stroke:0.35px #5f6368;">19</div>
<div class="cell" style="left:86px;top:1066.4px;width:200px;padding-left:6px;box-sizing:border-box;font-weight:normal;">Mia</div>
<div class="cell" style="left:288px;top:1066.4px;width:200px;padding-left:6px;box-sizing:border-box;font-weight:normal;">Martinez</div>
<div class="cell" style="left:490px;top:1066.4px;width:356px;padding-left:6px;box-sizing:border-box;font-weight:normal;">mia@labelsmerge.com</div>
<div class="cell" style="left:848px;top:1066.4px;width:340px;padding-left:6px;box-sizing:border-box;font-weight:normal;">1914 Abbey Ridge Dr</div>
<div class="cell" style="left:1190px;top:1066.4px;width:200px;padding-left:6px;box-sizing:border-box;font-weight:normal;">Dover</div>
<div class="cell" style="left:1392px;top:1066.4px;width:200px;padding-left:6px;box-sizing:border-box;font-weight:normal;">33527-6008</div>
<div class="cell" style="left:1594px;top:1066.4px;width:200px;padding-left:6px;box-sizing:border-box;font-weight:normal;">FL</div>
<div class="t" style="left:0px;top:1108.0px;width:78px;text-align:center;font-size:22px;line-height:22px;color:#5f6368;-webkit-text-stroke:0.35px #5f6368;">20</div>
<div class="cell" style="left:86px;top:1108.4px;width:200px;padding-left:6px;box-sizing:border-box;font-weight:normal;">Harper</div>
<div class="cell" style="left:288px;top:1108.4px;width:200px;padding-left:6px;box-sizing:border-box;font-weight:normal;">Moore</div>
<div class="cell" style="left:490px;top:1108.4px;width:356px;padding-left:6px;box-sizing:border-box;font-weight:normal;">harper@labelsmerge.com</div>
<div class="cell" style="left:848px;top:1108.4px;width:340px;padding-left:6px;box-sizing:border-box;font-weight:normal;">4623 Fietzway Rd</div>
<div class="cell" style="left:1190px;top:1108.4px;width:200px;padding-left:6px;box-sizing:border-box;font-weight:normal;">Holiday</div>
<div class="cell" style="left:1392px;top:1108.4px;width:200px;padding-left:6px;box-sizing:border-box;font-weight:normal;">34691-4731</div>
<div class="cell" style="left:1594px;top:1108.4px;width:200px;padding-left:6px;box-sizing:border-box;font-weight:normal;">FL</div>
<div class="t" style="left:0px;top:1150.0px;width:78px;text-align:center;font-size:22px;line-height:22px;color:#5f6368;-webkit-text-stroke:0.35px #5f6368;">21</div>
<div class="cell" style="left:86px;top:1150.4px;width:200px;padding-left:6px;box-sizing:border-box;font-weight:normal;">Evelyn</div>
<div class="cell" style="left:288px;top:1150.4px;width:200px;padding-left:6px;box-sizing:border-box;font-weight:normal;">Hernandez</div>
<div class="cell" style="left:490px;top:1150.4px;width:356px;padding-left:6px;box-sizing:border-box;font-weight:normal;">evelyn@labelsmerge.com</div>
<div class="cell" style="left:848px;top:1150.4px;width:340px;padding-left:6px;box-sizing:border-box;font-weight:normal;">11910 North St</div>
<div class="cell" style="left:1190px;top:1150.4px;width:200px;padding-left:6px;box-sizing:border-box;font-weight:normal;">Gibsonton</div>
<div class="cell" style="left:1392px;top:1150.4px;width:200px;padding-left:6px;box-sizing:border-box;font-weight:normal;">33534-5614</div>
<div class="cell" style="left:1594px;top:1150.4px;width:200px;padding-left:6px;box-sizing:border-box;font-weight:normal;">FL</div>
<div class="t" style="left:0px;top:1192.0px;width:78px;text-align:center;font-size:22px;line-height:22px;color:#5f6368;-webkit-text-stroke:0.35px #5f6368;">22</div>
<div class="cell" style="left:86px;top:1192.4px;width:200px;padding-left:6px;box-sizing:border-box;font-weight:normal;">Benjamin</div>
<div class="cell" style="left:288px;top:1192.4px;width:200px;padding-left:6px;box-sizing:border-box;font-weight:normal;">Jones</div>
<div class="cell" style="left:490px;top:1192.4px;width:356px;padding-left:6px;box-sizing:border-box;font-weight:normal;">benjamin@labelsmerge.com</div>
<div class="cell" style="left:848px;top:1192.4px;width:340px;padding-left:6px;box-sizing:border-box;font-weight:normal;">1832 Coyote Pl</div>
<div class="cell" style="left:1190px;top:1192.4px;width:200px;padding-left:6px;box-sizing:border-box;font-weight:normal;">Nokomis</div>
<div class="cell" style="left:1392px;top:1192.4px;width:200px;padding-left:6px;box-sizing:border-box;font-weight:normal;">34275-1634</div>
<div class="cell" style="left:1594px;top:1192.4px;width:200px;padding-left:6px;box-sizing:border-box;font-weight:normal;">FL</div>
<div class="t" style="left:0px;top:1234.0px;width:78px;text-align:center;font-size:22px;line-height:22px;color:#5f6368;-webkit-text-stroke:0.35px #5f6368;">23</div>
<div class="cell" style="left:86px;top:1234.4px;width:200px;padding-left:6px;box-sizing:border-box;font-weight:normal;">Lucas</div>
<div class="cell" style="left:288px;top:1234.4px;width:200px;padding-left:6px;box-sizing:border-box;font-weight:normal;">Rodriguez</div>
<div class="cell" style="left:490px;top:1234.4px;width:356px;padding-left:6px;box-sizing:border-box;font-weight:normal;">lucas@labelsmerge.com</div>
<div class="cell" style="left:848px;top:1234.4px;width:340px;padding-left:6px;box-sizing:border-box;font-weight:normal;">507 N Bryan Cir</div>
<div class="cell" style="left:1190px;top:1234.4px;width:200px;padding-left:6px;box-sizing:border-box;font-weight:normal;">Brandon</div>
<div class="cell" style="left:1392px;top:1234.4px;width:200px;padding-left:6px;box-sizing:border-box;font-weight:normal;">33511-6032</div>
<div class="cell" style="left:1594px;top:1234.4px;width:200px;padding-left:6px;box-sizing:border-box;font-weight:normal;">FL</div>
<div class="t" style="left:0px;top:1276.0px;width:78px;text-align:center;font-size:22px;line-height:22px;color:#5f6368;-webkit-text-stroke:0.35px #5f6368;">24</div>
<div class="cell" style="left:86px;top:1276.4px;width:200px;padding-left:6px;box-sizing:border-box;font-weight:normal;">Mason</div>
<div class="cell" style="left:288px;top:1276.4px;width:200px;padding-left:6px;box-sizing:border-box;font-weight:normal;">Davis</div>
<div class="cell" style="left:490px;top:1276.4px;width:356px;padding-left:6px;box-sizing:border-box;font-weight:normal;">mason@labelsmerge.com</div>
<div class="cell" style="left:848px;top:1276.4px;width:340px;padding-left:6px;box-sizing:border-box;font-weight:normal;">521 Tuscanny Park Loop</div>
<div class="cell" style="left:1190px;top:1276.4px;width:200px;padding-left:6px;box-sizing:border-box;font-weight:normal;">Venice</div>
<div class="cell" style="left:1392px;top:1276.4px;width:200px;padding-left:6px;box-sizing:border-box;font-weight:normal;">34293-5561</div>
<div class="cell" style="left:1594px;top:1276.4px;width:200px;padding-left:6px;box-sizing:border-box;font-weight:normal;">FL</div>
<div class="t" style="left:0px;top:1318.0px;width:78px;text-align:center;font-size:22px;line-height:22px;color:#5f6368;-webkit-text-stroke:0.35px #5f6368;">25</div>
<div class="cell" style="left:86px;top:1318.4px;width:200px;padding-left:6px;box-sizing:border-box;font-weight:normal;">Ethan</div>
<div class="cell" style="left:288px;top:1318.4px;width:200px;padding-left:6px;box-sizing:border-box;font-weight:normal;">Gonzalez</div>
<div class="cell" style="left:490px;top:1318.4px;width:356px;padding-left:6px;box-sizing:border-box;font-weight:normal;">ethan@labelsmerge.com</div>
<div class="cell" style="left:848px;top:1318.4px;width:340px;padding-left:6px;box-sizing:border-box;font-weight:normal;">605 Tomahawk Trl</div>
<div class="cell" style="left:1190px;top:1318.4px;width:200px;padding-left:6px;box-sizing:border-box;font-weight:normal;">Apollo Beach</div>
<div class="cell" style="left:1392px;top:1318.4px;width:200px;padding-left:6px;box-sizing:border-box;font-weight:normal;">33572-3517</div>
<div class="cell" style="left:1594px;top:1318.4px;width:200px;padding-left:6px;box-sizing:border-box;font-weight:normal;">FL</div>
<div class="t" style="left:0px;top:1360.0px;width:78px;text-align:center;font-size:22px;line-height:22px;color:#5f6368;-webkit-text-stroke:0.35px #5f6368;">26</div>
<div class="cell" style="left:86px;top:1360.4px;width:200px;padding-left:6px;box-sizing:border-box;font-weight:normal;">Olivia</div>
<div class="cell" style="left:288px;top:1360.4px;width:200px;padding-left:6px;box-sizing:border-box;font-weight:normal;">Taylor</div>
<div class="cell" style="left:490px;top:1360.4px;width:356px;padding-left:6px;box-sizing:border-box;font-weight:normal;">olivia@labelsmerge.com</div>
<div class="cell" style="left:848px;top:1360.4px;width:340px;padding-left:6px;box-sizing:border-box;font-weight:normal;">773 Spring Flowers Trl</div>
<div class="cell" style="left:1190px;top:1360.4px;width:200px;padding-left:6px;box-sizing:border-box;font-weight:normal;">Brooksville</div>
<div class="cell" style="left:1392px;top:1360.4px;width:200px;padding-left:6px;box-sizing:border-box;font-weight:normal;">34602-6285</div>
<div class="cell" style="left:1594px;top:1360.4px;width:200px;padding-left:6px;box-sizing:border-box;font-weight:normal;">FL</div>
<div class="t" style="left:0px;top:1402.0px;width:78px;text-align:center;font-size:22px;line-height:22px;color:#5f6368;-webkit-text-stroke:0.35px #5f6368;">27</div>
<div class="cell" style="left:86px;top:1402.4px;width:200px;padding-left:6px;box-sizing:border-box;font-weight:normal;">Emma</div>
<div class="cell" style="left:288px;top:1402.4px;width:200px;padding-left:6px;box-sizing:border-box;font-weight:normal;">Wilson</div>
<div class="cell" style="left:490px;top:1402.4px;width:356px;padding-left:6px;box-sizing:border-box;font-weight:normal;">emma@labelsmerge.com</div>
<div class="cell" style="left:848px;top:1402.4px;width:340px;padding-left:6px;box-sizing:border-box;font-weight:normal;">812 Ridge Haven Dr</div>
<div class="cell" style="left:1190px;top:1402.4px;width:200px;padding-left:6px;box-sizing:border-box;font-weight:normal;">Brandon</div>
<div class="cell" style="left:1392px;top:1402.4px;width:200px;padding-left:6px;box-sizing:border-box;font-weight:normal;">33511-7040</div>
<div class="cell" style="left:1594px;top:1402.4px;width:200px;padding-left:6px;box-sizing:border-box;font-weight:normal;">FL</div>
<div class="t" style="left:0px;top:1444.0px;width:78px;text-align:center;font-size:22px;line-height:22px;color:#5f6368;-webkit-text-stroke:0.35px #5f6368;">28</div>
<div class="cell" style="left:86px;top:1444.4px;width:200px;padding-left:6px;box-sizing:border-box;font-weight:normal;">Ava</div>
<div class="cell" style="left:288px;top:1444.4px;width:200px;padding-left:6px;box-sizing:border-box;font-weight:normal;">Garcia</div>
<div class="cell" style="left:490px;top:1444.4px;width:356px;padding-left:6px;box-sizing:border-box;font-weight:normal;">ava@labelsmerge.com</div>
<div class="cell" style="left:848px;top:1444.4px;width:340px;padding-left:6px;box-sizing:border-box;font-weight:normal;">31445 Amberlea Rd</div>
<div class="cell" style="left:1190px;top:1444.4px;width:200px;padding-left:6px;box-sizing:border-box;font-weight:normal;">Zephyrhills</div>
<div class="cell" style="left:1392px;top:1444.4px;width:200px;padding-left:6px;box-sizing:border-box;font-weight:normal;">33541-2188</div>
<div class="cell" style="left:1594px;top:1444.4px;width:200px;padding-left:6px;box-sizing:border-box;font-weight:normal;">FL</div>
<div class="r" style="left:0px;top:1487px;width:2763px;height:1px;background:#e2e3e3;"></div>
<div class="r" style="left:86px;top:342px;width:1710px;height:2px;background:#1a73e8;"></div>
<div class="r" style="left:86px;top:384px;width:1710px;height:2px;background:#1a73e8;"></div>
<div class="r" style="left:1794px;top:342px;width:2px;height:44px;background:#1a73e8;"></div>
<div class="r" style="left:86px;top:342px;width:202px;height:44px;box-sizing:border-box;border:4px solid #1a73e8;border-left-width:2px;"></div>
<div class="r" style="left:88px;top:346px;width:196px;height:36px;border:1px solid #fff;box-sizing:border-box;"></div>
<div class="r" style="left:1786px;top:376px;width:16px;height:16px;background:#fff;"></div>
<div class="r" style="left:1788px;top:378px;width:12px;height:12px;background:#1a73e8;"></div>
<div class="r" style="left:2739px;top:302px;width:24px;height:1185px;background:#fff;"></div>
<div class="r" style="left:2739px;top:254px;width:1px;height:1256px;background:#e2e3e3;"></div>
<div class="r" style="left:2742px;top:304px;width:18px;height:52px;background:#dadce0;border-radius:9px;"></div>
<div class="r" style="left:2739px;top:1422px;width:24px;height:1px;background:#e2e3e3;"></div>
<div class="r" style="left:2739px;top:1454px;width:24px;height:1px;background:#e2e3e3;"></div>
<div class="r" style="left:2738px;top:254px;width:2px;height:1257px;background:#dadada;"></div>
<div class="r" style="left:2740px;top:1424px;width:23px;height:30px;background:#f8f8f8;"></div>
<div class="r" style="left:2740px;top:1456px;width:23px;height:30px;background:#f8f8f8;"></div>
<div class="r" style="left:2740px;top:1422px;width:23px;height:2px;background:#dadada;"></div>
<div class="r" style="left:2740px;top:1454px;width:23px;height:2px;background:#dadada;"></div>
<svg class="s" style="left:2745.5px;top:1433.6px;" width="10.5" height="6.2" viewBox="0 0 10.5 6.2"><path fill="#909090" d="M0 6.2H10.5L5.25 0Z"/></svg>
<svg class="s" style="left:2745.5px;top:1468px;" width="10.5" height="6.2" viewBox="0 0 10.5 6.2"><path fill="#909090" d="M0 0H10.5L5.25 6.2Z"/></svg>
<div class="r" style="left:0px;top:1486px;width:2763px;height:2px;background:#d6d6d6;"></div>
<div class="r" style="left:0px;top:1488px;width:84px;height:22px;background:#f8f9fa;"></div>
<div class="r" style="left:84px;top:1488px;width:2px;height:22px;background:#e2e3e3;"></div>
<div class="r" style="left:86px;top:1488px;width:2653px;height:22px;background:#fff;"></div>
<div class="r" style="left:88px;top:1490px;width:1234px;height:18px;background:#dadce0;border-radius:9px;"></div>
<div class="r" style="left:2674px;top:1488px;width:2px;height:22px;background:#dadada;"></div>
<div class="r" style="left:2676px;top:1488px;width:30px;height:22px;background:#f8f8f8;"></div>
<div class="r" style="left:2706px;top:1488px;width:2px;height:22px;background:#dadada;"></div>
<div class="r" style="left:2708px;top:1488px;width:30px;height:22px;background:#f8f8f8;"></div>
<div class="r" style="left:2738px;top:1488px;width:2px;height:22px;background:#dadada;"></div>
<div class="r" style="left:2740px;top:1488px;width:23px;height:22px;background:#f8f8f8;"></div>
<svg class="s" style="left:2685.5px;top:1493.6px;" width="6.5" height="10.8" viewBox="0 0 6.5 10.8"><path fill="#909090" d="M6.5 0V10.8L0 5.4Z"/></svg>
<svg class="s" style="left:2719.6px;top:1493.6px;" width="6.5" height="10.8" viewBox="0 0 6.5 10.8"><path fill="#909090" d="M0 0V10.8L6.5 5.4Z"/></svg>
<div class="r" style="left:0px;top:1510px;width:2763px;height:72px;background:#f1f3f4;"></div>
<div class="r" style="left:0px;top:1510px;width:2763px;height:2px;background:#e8eaed;"></div>
<svg class="s" style="left:95.7px;top:1538px;" width="20.3" height="20" viewBox="0 0 20.3 20"><path fill="#686b6b" d="M8.3 0H12.3V7.9H20.3V11.8H12.3V20H8.3V11.8H0V7.9H8.3Z"/></svg>
<svg class="s" style="left:156px;top:1538px;" width="24" height="22" viewBox="0 0 24 22"><path fill="#686b6b" d="M0 0H24V3.7H0Z M0 6.3H24V10H0Z M0 12.3H24V16H0Z M0 18.3H24V22H0Z"/></svg>
<div class="r" style="left:228px;top:1512px;width:188px;height:70px;background:#fff;box-shadow:0 0 6px rgba(60,64,67,0.25);"></div>
<div class="t" style="left:258.5px;top:1536.4px;font-size:28px;line-height:28px;color:#188038;font-weight:normal;letter-spacing:0.6px;-webkit-text-stroke:0.9px #188038;">Sheet1</div>
<svg class="s" style="left:368.2px;top:1545.9px;" width="15.6" height="8" viewBox="0 0 16 8"><path fill="#188038" d="M0 0H16L8 8Z"/></svg>
<div class="t" style="left:2411.0px;top:1539.6px;font-size:22.5px;line-height:22.5px;color:#2d2f31;font-weight:normal;letter-spacing:-0.1px;-webkit-text-stroke:0.6px #2d2f31;">Count: 7</div>
<div class="r" style="left:2554px;top:1514px;width:2px;height:68px;background:#c8c8c8;"></div>
<div class="r" style="left:2556px;top:1514px;width:206px;height:68px;background:#fdfdfd;"></div>
<svg class="s" style="left:2580px;top:1532px;" width="36" height="42" viewBox="0 0 36 42"><path fill="#0f9d58" d="M4 0H32A4 4 0 0 1 36 4V31.5A4 4 0 0 1 32 35.5H24.2L18.2 41.4L12.2 35.5H4A4 4 0 0 1 0 31.5V4A4 4 0 0 1 4 0Z"/><path fill="#fff" d="M18.2 6.4Q20.8 15.3 29.9 17.9Q20.8 20.5 18.2 30Q15.6 20.5 6.6 17.9Q15.6 15.3 18.2 6.4Z"/></svg>
<div class="t" style="left:2642.0px;top:1540.7px;font-size:23px;line-height:23px;color:#0f9d58;font-weight:normal;letter-spacing:0.1px;-webkit-text-stroke:0.3px #0f9d58;">Explore</div>
<div class="r" style="left:2762px;top:128px;width:2px;height:1454px;background:#dadce0;"></div>
<svg class="s" style="left:2801px;top:165px;" width="37" height="37" viewBox="0 0 37 37"><path fill="#4285f4" d="M3 0H29V7.5H7.5V29H0V3A3 3 0 0 1 3 0Z"/><path fill="#1967d2" d="M29 0H34A3 3 0 0 1 37 3V7.5H29Z"/><path fill="#fbbc04" d="M29 7.5H37V29H29Z"/><path fill="#34a853" d="M7.5 29H29V37H7.5Z"/><path fill="#188038" d="M0 29H7.5V37H3A3 3 0 0 1 0 34Z"/><path fill="#ea4335" d="M29 29H37L29 37Z"/><path fill="#fff" d="M7.5 7.5H29V29H7.5Z"/></svg>
<svg class="s" style="left:2801px;top:165px;" width="37" height="37" viewBox="0 0 37 37"><g fill="none" stroke="#4285f4" stroke-width="1.9"><path d="M12.1 15.6C12.7 13.6 14.1 12.9 15.5 12.9C17.6 12.9 18.8 14.2 18.8 15.9C18.8 17.8 17.4 19 15.3 19C17.6 19 19.1 20.3 19.1 22.4C19.1 24.5 17.4 25.8 15.4 25.8C13.5 25.8 12.1 24.8 11.7 23.1"/><path d="M21.6 15.2L25.2 13.1V25.9"/></g></svg>
<svg class="s" style="left:2801px;top:277px;" width="38" height="38" viewBox="0 0 38 38"><rect x="0" y="0" width="38" height="38" rx="4" fill="#fbbc04"/><circle cx="19" cy="16.5" r="8" fill="#fff"/><rect x="14.8" y="26.5" width="8.4" height="3.3" fill="#fff"/></svg>
<svg class="s" style="left:2801.5px;top:389.5px;" width="37" height="37" viewBox="0 0 37 37"><circle cx="18.5" cy="18.5" r="18.5" fill="#4285f4"/><circle cx="9.2" cy="18.5" r="3.8" fill="#fbbc04"/><path d="M14 27L29 12.5" stroke="#fff" stroke-width="6" stroke-linecap="round"/></svg>
<div class="r" style="left:2800px;top:496px;width:40px;height:2px;background:#dadce0;"></div>
<svg class="s" style="left:2808.6px;top:686.4px;" width="23.4" height="23.4" viewBox="0 0 23.4 23.4"><path fill="#5f6368" d="M10.2 0H13.2V10.2H23.4V13.2H13.2V23.4H10.2V13.2H0V10.2H10.2Z"/></svg>
<svg class="s" style="left:2812px;top:1524.6px;" width="12.4" height="19.2" viewBox="0 0 12.4 19.2"><path fill="none" stroke="#5f6368" stroke-width="3" d="M1.2 1.2L10.2 9.6L1.2 18"/></svg>
</body></html>
